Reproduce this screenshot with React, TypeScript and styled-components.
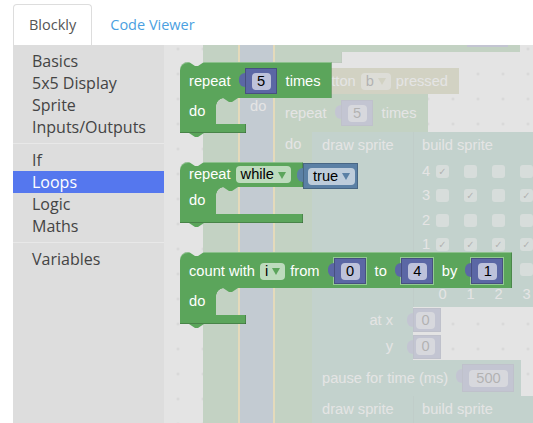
import React from "react";
import styled, { createGlobalStyle, css } from "styled-components";

// block colours (Blockly hue defaults)
const HUE = {
  loop: "#5ba55b",
  math: "#5b67a5",
  logic: "#5b80a5",
  sprite: "#5ba58c",
  event: "#a5a55b",
  glow: "#ffcc33",
};

const BLOCK_FONT = `"Liberation Sans", Arial, sans-serif`;
const UI_FONT = `"Open Sans", "Noto Sans", sans-serif`;

const NOTCH = "polygon(0 0, 100% 0, 9px 100%, 6px 100%)";

const TOOLBOX: (string | null)[] = [
  "Basics",
  "5x5 Display",
  "Sprite",
  "Inputs/Outputs",
  null,
  "If",
  "Loops",
  "Logic",
  "Maths",
  null,
  "Variables",
];

// rows 4..0 of the sprite, 1 = ticked
const SPRITE = ["10000", "01010", "00000", "11110", "00000"];

export default function App() {
  return (
    <>
      <GlobalStyle />
      <Page>
        <TabBar>
          <Tab $active>Blockly</Tab>
          <Tab>Code Viewer</Tab>
        </TabBar>
        <Content>
          <Toolbox>
            {TOOLBOX.map((name, i) =>
              name ? (
                <ToolItem key={i} $selected={name === "Loops"}>
                  {name}
                </ToolItem>
              ) : (
                <ToolSep key={i} />
              )
            )}
          </Toolbox>

          <Workspace>
            {/* program behind the flyout */}
            <Arm $x={39} $w={35} $c={HUE.loop} />
            <Arm $x={74} $w={37} $c={HUE.logic} $glow />
            <Arm $x={111} $w={37} $c={HUE.loop} />

            <Node $x={111} $y={0}>
              <Strip $c={HUE.loop} $w={245} $h={7} />
              <Foot $c={HUE.loop} $w={67} $h={11} />
            </Node>
            <Node $x={303} $y={0}>
              <ValueEdge />
            </Node>

            <Node $x={113} $y={23}>
              <Strip $c={HUE.event} $w={182} $h={26} $pr={11} $end>
                <span>on button</span>
                <Field>
                  b<Caret $c={HUE.event} />
                </Field>
                <span>pressed</span>
              </Strip>
            </Node>

            <Node $x={111} $y={49}>
              <Strip $c={HUE.loop} $w={153} $h={38}>
                <span>repeat</span>
                <Value $c={HUE.math}>
                  <Field>5</Field>
                </Value>
                <span>times</span>
              </Strip>
            </Node>
            <Node $x={86} $y={53}>
              do
            </Node>
            <Node $x={121} $y={91}>
              do
            </Node>

            <Node $x={148} $y={87}>
              <Stack>
                <SpriteRow>
                  <DrawBody $h={228}>
                    <BlockHeader>draw sprite</BlockHeader>
                    <InputStack>
                      <InputRow $h={26}>
                        <span>at x</span>
                        <SideValue $c={HUE.math} $h={24}>
                          <Field>0</Field>
                        </SideValue>
                      </InputRow>
                      <InputRow $h={27}>
                        <span>y</span>
                        <SideValue $c={HUE.math} $h={24}>
                          <Field>0</Field>
                        </SideValue>
                      </InputRow>
                    </InputStack>
                  </DrawBody>
                  <BuildSprite $h={175}>
                    <BlockHeader $pl={0} $h={27}>
                      build sprite
                    </BlockHeader>
                    <Matrix>
                      {SPRITE.map((row, r) => (
                        <React.Fragment key={r}>
                          <span>{4 - r}</span>
                          {row.split("").map((v, c) => (
                            <Cell key={c}>{v === "1" ? "✓" : ""}</Cell>
                          ))}
                        </React.Fragment>
                      ))}
                      <span />
                      {[0, 1, 2, 3, 4].map((n) => (
                        <ColNum key={n}>{n}</ColNum>
                      ))}
                    </Matrix>
                  </BuildSprite>
                </SpriteRow>

                <Strip $c={HUE.sprite} $w={209} $h={36}>
                  <span>pause for time (ms)</span>
                  <Value $c={HUE.math} $h={28}>
                    <Field $px={7}>500</Field>
                  </Value>
                </Strip>

                <SpriteRow>
                  <DrawBody $h={40}>
                    <BlockHeader>draw sprite</BlockHeader>
                  </DrawBody>
                  <BuildSprite $h={40}>
                    <BlockHeader $pl={0}>build sprite</BlockHeader>
                  </BuildSprite>
                </SpriteRow>
              </Stack>
            </Node>

            {/* flyout of the Loops category */}
            <Flyout>
              <FlyoutList>
                <CBlock>
                  <HeadRow $c={HUE.loop} $pt={6} $pb={4} $pr={11}>
                    <span>repeat</span>
                    <Value $c={HUE.math}>
                      <Field>5</Field>
                    </Value>
                    <span>times</span>
                  </HeadRow>
                  <MouthRow $h={26}>
                    <DoArm $c={HUE.loop}>do</DoArm>
                    <Mouth $c={HUE.loop} />
                  </MouthRow>
                  <Foot $c={HUE.loop} $w={66} />
                </CBlock>

                <Attached>
                  <CBlock>
                    <HeadRow $c={HUE.loop} $pt={4} $pb={4} $pr={12}>
                      <span>repeat</span>
                      <Field>
                        while
                        <Caret $c={HUE.loop} />
                      </Field>
                    </HeadRow>
                    <MouthRow $h={27}>
                      <DoArm $c={HUE.loop}>do</DoArm>
                      <Mouth $c={HUE.loop} />
                    </MouthRow>
                    <Foot $c={HUE.loop} />
                  </CBlock>
                  <OutputBlock $c={HUE.logic}>
                    <Field>
                      true
                      <Caret $c={HUE.logic} />
                    </Field>
                  </OutputBlock>
                </Attached>

                <CBlock>
                  <HeadRow $c={HUE.loop} $pt={6} $pb={4} $pr={5}>
                    <span>count with</span>
                    <Field>
                      i<Caret $c={HUE.loop} />
                    </Field>
                    <span>from</span>
                    <Value $c={HUE.math} $ring>
                      <Field>0</Field>
                    </Value>
                    <span>to</span>
                    <Value $c={HUE.math} $ring>
                      <Field>4</Field>
                    </Value>
                    <span>by</span>
                    <Value $c={HUE.math} $ring>
                      <Field>1</Field>
                    </Value>
                  </HeadRow>
                  <MouthRow $h={27}>
                    <DoArm $c={HUE.loop}>do</DoArm>
                    <Mouth $c={HUE.loop} />
                  </MouthRow>
                  <Foot $c={HUE.loop} $w={66} />
                </CBlock>
              </FlyoutList>
            </Flyout>
          </Workspace>
        </Content>
      </Page>
    </>
  );
}

const GlobalStyle = createGlobalStyle`
  html, body {
    margin: 0;
    padding: 0;
    background: #fff;
    overflow: hidden;
  }
  * {
    box-sizing: border-box;
  }
`;

const Page = styled.div`
  height: 423px;
  padding: 4px 0 0 13px;
  display: flex;
  flex-direction: column;
  font-family: ${UI_FONT};
`;

const TabBar = styled.ul`
  display: flex;
  flex-shrink: 0;
  height: 41px;
  margin: 0;
  padding: 0;
  list-style: none;
`;

const Tab = styled.li<{ $active?: boolean }>`
  height: 41px;
  margin-right: 2px;
  padding: 0 15px;
  border: 1px solid transparent;
  border-bottom: 0;
  border-radius: 4px 4px 0 0;
  font-size: 14.5px;
  line-height: 39px;
  color: #4b9fe1;

  ${(p) =>
    p.$active &&
    css`
      border-color: #ddd;
      background: #fff;
      color: #555;
    `}
`;

const Content = styled.div`
  flex: 1;
  display: flex;
  min-height: 0;
`;

const Toolbox = styled.div`
  width: 151px;
  flex-shrink: 0;
  padding-top: 5px;
  background: #ddd;
`;

const ToolItem = styled.div<{ $selected?: boolean }>`
  height: 22px;
  padding-left: 19px;
  font-size: 16px;
  line-height: 22px;
  color: #444;
  white-space: nowrap;

  ${(p) =>
    p.$selected &&
    css`
      background: #5577ee;
      color: #fff;
    `}
`;

const ToolSep = styled.div`
  margin: 5px 0;
  border-bottom: 1px solid #e8e8e8;
`;

const Workspace = styled.div`
  position: relative;
  flex: 1;
  overflow: hidden;
  background-color: #fff;
  background-image: radial-gradient(circle, #bdbdbd 0, #bdbdbd 1px, transparent 1.6px);
  background-size: 25px 25px;
  background-position: 1.5px -8.5px;
  font: 14.67px/17px ${BLOCK_FONT};
  color: #fff;
  white-space: nowrap;
`;

const Flyout = styled.div`
  position: absolute;
  inset: 0;
  background: rgba(221, 221, 221, 0.8);
`;

const FlyoutList = styled.div`
  display: flex;
  flex-direction: column;
  align-items: flex-start;
  gap: 29px;
  padding: 17px 0 0 16px;
`;

// ---- blocks ----

const Node = styled.div<{ $x: number; $y: number }>`
  position: absolute;
  left: ${(p) => p.$x}px;
  top: ${(p) => p.$y}px;
`;

const Arm = styled.div<{ $x: number; $w: number; $c: string; $glow?: boolean }>`
  position: absolute;
  top: 0;
  bottom: 0;
  left: ${(p) => p.$x}px;
  width: ${(p) => p.$w}px;
  background: ${(p) => p.$c};

  ${(p) =>
    p.$glow &&
    css`
      border-left: 2px solid ${HUE.glow};
      border-right: 2px solid ${HUE.glow};
    `}
`;

const CBlock = styled.div`
  display: inline-flex;
  flex-direction: column;
`;

const Attached = styled.div`
  display: flex;
  align-items: flex-start;
`;

const HeadRow = styled.div<{ $c: string; $pt: number; $pb: number; $pr: number }>`
  display: flex;
  align-items: center;
  gap: 5px;
  padding: ${(p) => `${p.$pt}px ${p.$pr}px ${p.$pb}px 9px`};
  background: ${(p) => p.$c};
  border-radius: 8px 0 0 0;
  box-shadow: inset 0 1px 0 rgba(255, 255, 255, 0.3), inset -1px 0 0 rgba(0, 0, 0, 0.18);
  clip-path: polygon(0 0, 9px 0, 15px 4px, 18px 4px, 24px 0, 100% 0, 100% 100%, 0 100%);
`;

const MouthRow = styled.div<{ $h: number }>`
  display: flex;
  height: ${(p) => p.$h}px;
`;

const DoArm = styled.div<{ $c: string }>`
  width: 36px;
  display: flex;
  align-items: center;
  padding-left: 9px;
  background: ${(p) => p.$c};
`;

const Mouth = styled.div<{ $c: string }>`
  flex: 1;
  position: relative;

  &::before {
    content: "";
    position: absolute;
    left: 0;
    top: 0;
    width: 8px;
    height: 8px;
    background: radial-gradient(circle at 100% 100%, transparent 7.5px, ${(p) => p.$c} 8px);
  }

  &::after {
    content: "";
    position: absolute;
    left: 7px;
    top: 0;
    width: 15px;
    height: 4px;
    background: ${(p) => p.$c};
    clip-path: ${NOTCH};
  }
`;

const Foot = styled.div<{ $c: string; $w?: number; $h?: number }>`
  position: relative;
  height: ${(p) => p.$h ?? 9}px;
  ${(p) => (p.$w ? `width: ${p.$w}px;` : "")}
  background: ${(p) => p.$c};
  box-shadow: inset 0 -1px 0 rgba(0, 0, 0, 0.2), inset -1px 0 0 rgba(0, 0, 0, 0.18);

  &::after {
    content: "";
    position: absolute;
    left: 9px;
    top: 100%;
    width: 15px;
    height: 4px;
    background: ${(p) => p.$c};
    clip-path: ${NOTCH};
  }
`;

const Strip = styled.div<{
  $c: string;
  $w?: number;
  $h: number;
  $pr?: number;
  $end?: boolean;
}>`
  display: flex;
  align-items: center;
  gap: 5px;
  height: ${(p) => p.$h}px;
  ${(p) => (p.$w ? `width: ${p.$w}px;` : "")}
  padding: 0 ${(p) => p.$pr ?? 0}px 0 10px;
  background: ${(p) => p.$c};
  ${(p) => (p.$end ? "justify-content: flex-end;" : "")}
`;

const Value = styled.span<{ $c: string; $h?: number; $ring?: boolean }>`
  position: relative;
  display: inline-flex;
  align-items: center;
  height: ${(p) => p.$h ?? 26}px;
  margin: 0 4px 0 9px;
  padding: 0 6px 0 7px;
  background: ${(p) => p.$c};
  box-shadow: inset 0 0 0 1px rgba(0, 0, 0, 0.22)
    ${(p) => (p.$ring ? ", 0 0 0 1px #93c993" : "")};

  &::before {
    content: "";
    position: absolute;
    left: -6px;
    top: 5px;
    width: 6px;
    height: 14px;
    background: ${(p) => p.$c};
    border-radius: 7px 0 0 7px;
  }
`;

const SideValue = styled(Value)`
  width: 28px;
  margin: 0 -28px 0 0;
  padding: 0 5px 0 3px;
`;

const OutputBlock = styled.div<{ $c: string }>`
  position: relative;
  display: flex;
  align-items: center;
  height: 26px;
  margin-top: 1px;
  padding: 0 3px 0 5px;
  background: ${(p) => p.$c};
  box-shadow: inset 0 0 0 1px rgba(0, 0, 0, 0.2);

  &::before {
    content: "";
    position: absolute;
    left: -6px;
    top: 5px;
    width: 6px;
    height: 14px;
    background: ${(p) => p.$c};
    border-radius: 7px 0 0 7px;
  }
`;

const ValueEdge = styled.div`
  width: 41px;
  height: 2px;
  background: ${HUE.math};
`;

const Field = styled.span<{ $px?: number }>`
  display: inline-flex;
  align-items: center;
  justify-content: center;
  gap: 4px;
  min-width: 19px;
  height: 17px;
  padding: 0 ${(p) => p.$px ?? 5}px;
  border-radius: 4px;
  background: rgba(255, 255, 255, 0.6);
  color: #000;
`;

const Caret = styled.span<{ $c: string }>`
  width: 0;
  height: 0;
  margin-top: 1px;
  border-left: 4px solid transparent;
  border-right: 4px solid transparent;
  border-top: 7px solid ${(p) => p.$c};
`;

// ---- sprite blocks in the workspace ----

const Stack = styled.div`
  display: flex;
  flex-direction: column;
`;

const SpriteRow = styled.div`
  display: flex;
  align-items: flex-start;
`;

const DrawBody = styled.div<{ $h: number }>`
  width: 101px;
  height: ${(p) => p.$h}px;
  display: flex;
  flex-direction: column;
  background: ${HUE.sprite};
`;

const BlockHeader = styled.div<{ $pl?: number; $h?: number }>`
  height: ${(p) => p.$h ?? 26}px;
  display: flex;
  align-items: center;
  padding-left: ${(p) => p.$pl ?? 10}px;
`;

const InputStack = styled.div`
  margin-top: auto;
`;

const InputRow = styled.div<{ $h: number }>`
  height: ${(p) => p.$h}px;
  display: flex;
  align-items: center;
  justify-content: flex-end;
  gap: 20px;
`;

const BuildSprite = styled.div<{ $h: number }>`
  position: relative;
  width: 170px;
  height: ${(p) => p.$h}px;
  padding-left: 9px;
  background: ${HUE.sprite};
  box-shadow: inset 1px 0 0 rgba(0, 0, 0, 0.15);
`;

const Matrix = styled.div`
  display: grid;
  grid-template-columns: 14px repeat(5, 28px);
  grid-template-rows: repeat(5, 24.5px) 26px;
  align-items: center;
`;

const Cell = styled.span`
  width: 13px;
  height: 13px;
  border-radius: 3px;
  background: rgba(255, 255, 255, 0.6);
  color: #000;
  font: 10px/13px "DejaVu Sans", sans-serif;
  text-align: center;
`;

const ColNum = styled.span`
  width: 13px;
  text-align: center;
`;
